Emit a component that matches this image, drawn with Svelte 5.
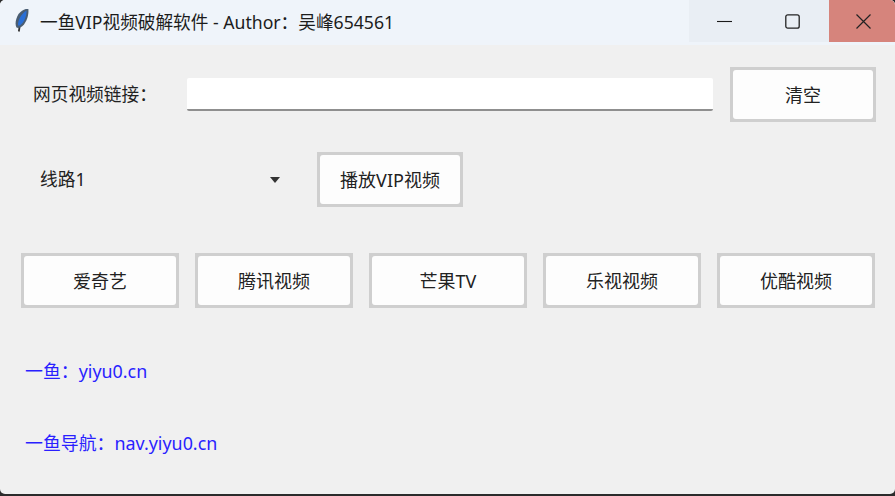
<script>
    const sites = ["爱奇艺", "腾讯视频", "芒果TV", "乐视视频", "优酷视频"];
    const links = ["一鱼：yiyu0.cn", "一鱼导航：nav.yiyu0.cn"];
</script>

<div class="window">
    <header class="titlebar">
        <svg class="feather" width="18" height="28" viewBox="13 8.500 18 28">
            <path d="M19.800 25 L18.800 31" stroke="#333" stroke-width="1.800" fill="none" />
            <path d="M16.500 27 C14.800 24 15.500 18.500 18.500 13.500 C21.500 10 25 8.300 28.300 8 C29 13 27.500 20.500 22.500 25.500 C20.800 27 18.300 28 16.500 27 Z" fill="#4a5d72" />
            <path d="M18 25 C17.800 20 20.800 13.800 26.500 10 C26.800 15 24.500 21.500 20 25 Z" fill="#2a6fd6" />
        </svg>
        <span class="title">一鱼VIP视频破解软件 - Author：吴峰654561</span>
        <div class="controls">
            <div class="ctrl min">
                <svg width="15" height="15" viewBox="0 0 15 15"><path d="M0 7.500 H15" stroke="#1a1a1a" stroke-width="1.100" /></svg>
            </div>
            <div class="ctrl max">
                <svg width="15" height="15" viewBox="0 0 15 15"><rect x="0.800" y="0.800" width="13.400" height="13.400" rx="2" fill="none" stroke="#222" stroke-width="1.300" /></svg>
            </div>
            <div class="ctrl close">
                <svg width="15" height="15" viewBox="0 0 15 15"><path d="M0.500 0.500 L14.500 14.500 M14.500 0.500 L0.500 14.500" stroke="#222" stroke-width="1.200" /></svg>
            </div>
        </div>
    </header>

    <main class="content">
        <div class="row url-row">
            <label class="url-label" for="url">网页视频链接：</label>
            <input id="url" class="url-input" type="text" />
            <button class="btn clear"><span>清空</span></button>
        </div>

        <div class="row line-row">
            <div class="select">
                <span class="line-name">线路1</span>
                <span class="arrow"></span>
            </div>
            <button class="btn play"><span>播放VIP视频</span></button>
        </div>

        <div class="sites">
            {#each sites as site}
                <button class="btn site"><span>{site}</span></button>
            {/each}
        </div>

        <div class="links">
            {#each links as link}
                <span class="link">{link}</span>
            {/each}
        </div>
    </main>
</div>

<style>
    :global(body) {
        margin: 0;
        background: #2b2b2b;
    }

    .window {
        width: 895px;
        height: 494px;
        display: flex;
        flex-direction: column;
        overflow: hidden;
        border-radius: 5px;
        background: #f0f0f0;
        font-family: "Noto Sans", "Noto Sans CJK SC", sans-serif;
        color: #222;
    }

    .titlebar {
        height: 45px;
        flex: none;
        display: flex;
        align-items: center;
        background: #eff4fa;
        padding-left: 13px;
    }

    .feather {
        flex: none;
    }

    .title {
        margin-left: 9px;
        padding-bottom: 2px;
        font-size: 17.650px;
        color: #1c1c1c;
        white-space: nowrap;
    }

    .controls {
        margin-left: auto;
        display: flex;
        align-self: flex-start;
        height: 42px;
    }

    .ctrl {
        display: flex;
        align-items: center;
        justify-content: center;
        box-sizing: border-box;
        background: #e9eef4;
        width: 70px;
    }

    .ctrl.max {
        padding-right: 3px;
    }

    .ctrl.close {
        width: 66px;
        padding-left: 3px;
        background: #d6847c;
    }

    .content {
        flex: 1;
        display: flex;
        flex-direction: column;
        padding: 22px 19px 0 20px;
    }

    .row {
        display: flex;
        align-items: center;
    }

    .url-label {
        margin-left: 13px;
        padding-bottom: 3px;
        width: 154px;
        font-size: 17.700px;
        color: #222;
    }

    .url-input {
        width: 526px;
        height: 33px;
        box-sizing: border-box;
        border: none;
        border-bottom: 2px solid #8f8f8f;
        border-radius: 2px;
        background: #fff;
        padding: 0;
        outline: none;
    }

    .btn {
        box-sizing: border-box;
        height: 55px;
        padding: 3px;
        background: #cfcfcf;
        border: none;
        font-family: inherit;
        font-size: 18px;
        color: #222;
    }

    .btn span {
        display: flex;
        align-items: center;
        justify-content: center;
        box-sizing: border-box;
        height: 100%;
        padding-bottom: 2px;
        background: #fdfdfd;
        border-radius: 3px;
    }

    .clear {
        width: 146px;
        margin-left: 17px;
    }

    .line-row {
        margin-top: 30px;
    }

    .select {
        width: 297px;
        box-sizing: border-box;
        padding-left: 20px;
        display: flex;
        align-items: center;
        font-size: 17.700px;
        color: #222;
    }

    .line-name {
        padding-bottom: 3px;
    }

    .arrow {
        margin-left: 184px;
        width: 0;
        height: 0;
        border-left: 5.500px solid transparent;
        border-right: 5.500px solid transparent;
        border-top: 6px solid #333;
    }

    .play {
        width: 146px;
    }

    .sites {
        margin-top: 46px;
        padding-left: 1px;
        display: flex;
        gap: 16px;
    }

    .site {
        width: 158px;
    }

    .links {
        margin-top: 50px;
        padding-left: 5px;
        display: flex;
        flex-direction: column;
        gap: 46px;
    }

    .link {
        font-size: 17.900px;
        line-height: 26px;
        color: #2a1fff;
    }
</style>
